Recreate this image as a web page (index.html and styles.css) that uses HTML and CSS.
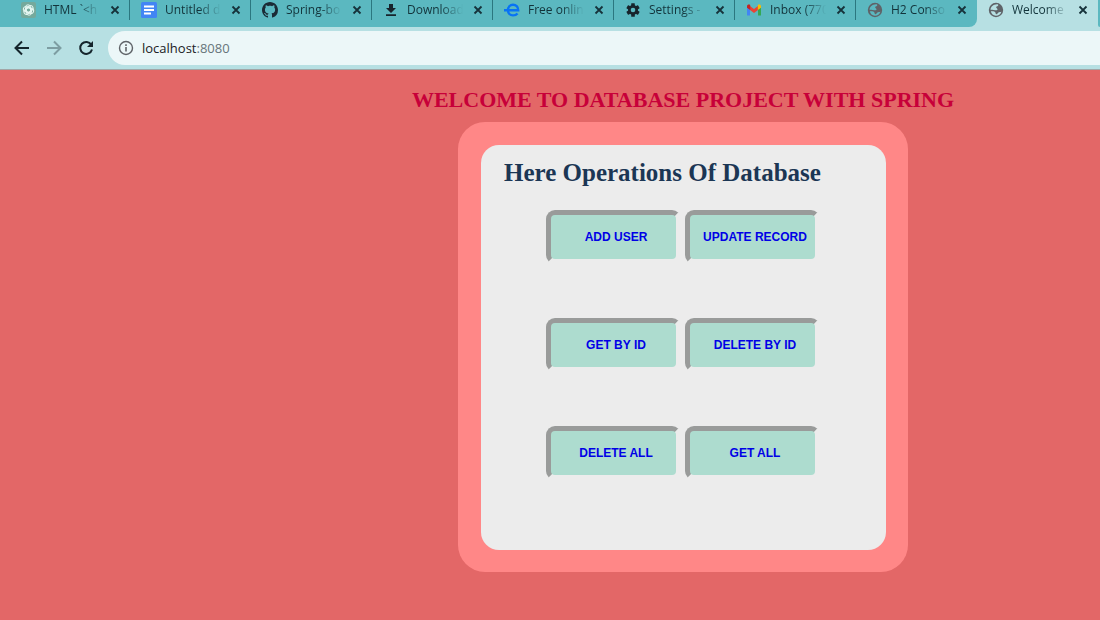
FILE: index.html
```html
<!DOCTYPE html>
<html lang="en">
<head>
<meta charset="utf-8">
<title>Welcome</title>
<link rel="stylesheet" href="styles.css">
</head>
<body>
<svg class="defs" aria-hidden="true">
  <symbol id="close" viewBox="0 0 10 10"><path d="M1.5 1.5l7 7M8.5 1.5l-7 7" stroke="#16323a" stroke-width="1.8" fill="none"/></symbol>
  <symbol id="globe" viewBox="0 0 16 16"><path fill-rule="evenodd" fill="#5f6368" d="M8 .8a7.200 7.200 0 1 0 0 14.400A7.200 7.200 0 0 0 8 .8zM9.500 2.300c.9.300 1 .9.500 1.500-.6.700-2 .6-1.800 1.800.1.900 1.200.7 1.300 1.700.1 1.200-1.600 1-2.700.9-.9-.1-2.500-.6-4.300-.4.200-2.800 2.700-5.700 7-5.500zM2.800 9.300c1.700-.2 3.600-.3 4.300.8.500.8.200 1.700 1.300 2.100.9.300 1.200-.9 2-1.600.9-.8 1.900-.5 3-.8-.8 2.600-3 4.100-5.600 4-2.500-.1-4.400-1.900-5-4.500z"/></symbol>
</svg>
<header class="browser">
  <nav class="tabs" aria-label="Tabs">
    <div class="tab">
      <svg class="icon" viewBox="0 0 16 16"><rect x="1" y="0" width="15" height="16" rx="2" fill="#75a99c"/><g fill="none" stroke="#e5f6f1" stroke-width="1"><rect x="5.500" y="2.800" width="5" height="8" rx="2.500"/><rect x="5.500" y="2.800" width="5" height="8" rx="2.500" transform="rotate(60 8.500 8)"/><rect x="5.500" y="2.800" width="5" height="8" rx="2.500" transform="rotate(120 8.500 8)"/><rect x="5.500" y="2.800" width="5" height="8" rx="2.500" transform="rotate(180 8.500 8)"/><rect x="5.500" y="2.800" width="5" height="8" rx="2.500" transform="rotate(240 8.500 8)"/><rect x="5.500" y="2.800" width="5" height="8" rx="2.500" transform="rotate(300 8.500 8)"/></g></svg>
      <span class="title">HTML `&lt;h</span>
      <button class="close" aria-label="Close tab"><svg><use href="#close"/></svg></button>
    </div>
    <div class="tab">
      <svg class="icon" viewBox="0 0 16 16"><rect width="16" height="16" rx="1.500" fill="#4285f4"/><path d="M3 4.500h10M3 8h10M3 11.500h7" stroke="#fff" stroke-width="1.800"/></svg>
      <span class="title">Untitled d</span>
      <button class="close" aria-label="Close tab"><svg><use href="#close"/></svg></button>
    </div>
    <div class="tab">
      <svg class="icon" viewBox="0 0 16 16"><path fill="#1b2b36" d="M8 0C3.580 0 0 3.580 0 8c0 3.540 2.290 6.530 5.470 7.590.4.070.550-.17.550-.38 0-.19-.01-.82-.01-1.490-2.010.37-2.530-.49-2.690-.94-.09-.23-.48-.94-.82-1.130-.28-.15-.68-.52-.01-.53.630-.01 1.080.58 1.230.82.720 1.210 1.870.87 2.330.66.070-.52.280-.87.510-1.070-1.780-.2-3.640-.89-3.640-3.950 0-.87.310-1.590.82-2.150-.08-.2-.36-1.020.08-2.120 0 0 .67-.21 2.200.82.640-.18 1.320-.27 2-.27s1.360.09 2 .27c1.530-1.040 2.200-.82 2.200-.82.440 1.100.16 1.920.08 2.120.51.560.82 1.270.82 2.150 0 3.070-1.870 3.750-3.650 3.950.29.250.54.730.54 1.480 0 1.070-.01 1.930-.01 2.200 0 .21.150.46.550.38A8 8 0 0 0 16 8c0-4.420-3.580-8-8-8z"/></svg>
      <span class="title">Spring-bo</span>
      <button class="close" aria-label="Close tab"><svg><use href="#close"/></svg></button>
    </div>
    <div class="tab">
      <svg class="icon" viewBox="0 0 16 16"><path d="M6 2h4v4h3L8 11 3 6h3zM3 12.200h10v1.800H3z" fill="#17242c"/></svg>
      <span class="title">Download</span>
      <button class="close" aria-label="Close tab"><svg><use href="#close"/></svg></button>
    </div>
    <div class="tab">
      <svg class="icon" viewBox="0 0 16 16"><path d="M0 8.200h14.200C14.200 4.700 12 2.800 9 2.800S4 5 4 8.200s2 5.200 5 5.200c2 0 3.500-.7 4.500-2" fill="none" stroke="#0873f5" stroke-width="2.400"/></svg>
      <span class="title">Free onlin</span>
      <button class="close" aria-label="Close tab"><svg><use href="#close"/></svg></button>
    </div>
    <div class="tab">
      <svg class="icon" viewBox="0 0 16 16"><g fill="#17242c"><rect x="6.200" y="1.300" width="3.600" height="13.400" rx=".5"/><rect x="6.200" y="1.300" width="3.600" height="13.400" rx=".5" transform="rotate(60 8 8)"/><rect x="6.200" y="1.300" width="3.600" height="13.400" rx=".5" transform="rotate(120 8 8)"/><circle cx="8" cy="8" r="5"/></g><circle cx="8" cy="8" r="2.300" fill="#5bb8c0"/></svg>
      <span class="title">Settings -</span>
      <button class="close" aria-label="Close tab"><svg><use href="#close"/></svg></button>
    </div>
    <div class="tab">
      <svg class="icon" viewBox="0 0 16 16"><path d="M1 4v9.500h3V6z" fill="#4285f4"/><path d="M15 4v9.500h-3V6z" fill="#34a853"/><path d="M4 4l4 3 4-3v4l-4 3-4-3z" fill="#ea4335"/><path d="M1 4.500C1 2.500 3 2 4.200 3v5L1 5.700z" fill="#c5221f"/><path d="M15 4.500c0-2-2-2.500-3.200-1.500v5L15 5.700z" fill="#fbbc04"/></svg>
      <span class="title">Inbox (770</span>
      <button class="close" aria-label="Close tab"><svg><use href="#close"/></svg></button>
    </div>
    <div class="tab before-active">
      <svg class="icon"><use href="#globe"/></svg>
      <span class="title">H2 Conso</span>
      <button class="close" aria-label="Close tab"><svg><use href="#close"/></svg></button>
    </div>
    <div class="tab active">
      <svg class="icon"><use href="#globe"/></svg>
      <span class="title">Welcome</span>
      <button class="close" aria-label="Close tab"><svg><use href="#close"/></svg></button>
    </div>
    <div class="rest"></div>
  </nav>
  <div class="toolbar">
    <button class="tool" aria-label="Back"><svg viewBox="0 0 16 16"><path d="M15 8H2M8 1.500L1.500 8 8 14.500" fill="none" stroke="#15252c" stroke-width="2"/></svg></button>
    <button class="tool" aria-label="Forward"><svg viewBox="0 0 16 16"><path d="M1 8h13M8 1.500L14.500 8 8 14.500" fill="none" stroke="#7d9da2" stroke-width="2"/></svg></button>
    <button class="tool" aria-label="Reload"><svg viewBox="0 0 16 16"><path d="M13.300 4.700A6 6 0 1 0 14 9.500" fill="none" stroke="#15252c" stroke-width="2"/><path d="M15 1v6H9z" fill="#15252c"/></svg></button>
    <div class="address">
      <svg class="info" viewBox="0 0 16 16"><circle cx="8" cy="8" r="6.500" fill="none" stroke="#5f6368" stroke-width="1.400"/><path d="M8 7v4.500M8 4.200v1.700" stroke="#5f6368" stroke-width="1.600"/></svg>
      <span class="url">localhost<span class="port">:8080</span></span>
    </div>
  </div>
</header>
<main class="page">
  <h1 class="welcome">WELCOME TO DATABASE PROJECT WITH SPRING</h1>
  <section class="card">
    <div class="panel">
      <h2 class="heading">Here Operations Of Database</h2>
      <div class="actions">
        <button class="action">ADD USER</button>
        <button class="action">UPDATE RECORD</button>
        <button class="action">GET BY ID</button>
        <button class="action">DELETE BY ID</button>
        <button class="action">DELETE ALL</button>
        <button class="action">GET ALL</button>
      </div>
    </div>
  </section>
</main>
</body>
</html>
```
FILE: styles.css
```css
* { box-sizing: border-box; }
body {
  margin: 0;
  min-height: 100vh;
  display: flex;
  flex-direction: column;
  background: #e36767;
  font-family: "Liberation Serif", "Times New Roman", serif;
}
button { margin: 0; padding: 0; border: 0; background: none; cursor: pointer; }
.defs { display: none; }

.browser {
  overflow: hidden;
  background: #b7e0e3;
  border-bottom: 1px solid #a3a5a6;
  font-family: "Open Sans", "Noto Sans", sans-serif;
}
.tabs { display: flex; height: 27px; padding-left: 9px; background: linear-gradient(90deg, #5bb8c0 50%, #b7e0e3 50%); }
.tab {
  flex: 0 0 121px;
  min-width: 0;
  display: flex;
  align-items: flex-start;
  padding: 2px 10px 0 11px;
  background: linear-gradient(#2b7780, #2b7780) right top / 1px 20px no-repeat #5bb8c0;
}
.before-active { background: #5bb8c0; border-bottom-right-radius: 8px; }
.active { background: #b7e0e3; }
.rest { flex: 1; background: #5bb8c0; border-bottom-left-radius: 8px; }
.icon { flex: none; width: 16px; height: 16px; }
.title {
  flex: 1;
  min-width: 0;
  margin: 0 10px 0 8px;
  overflow: hidden;
  white-space: nowrap;
  font-size: 12px;
  line-height: 16px;
  color: #12333a;
  mask-image: linear-gradient(90deg, #000 60%, transparent);
}
.close { flex: none; display: flex; align-items: center; width: 10px; height: 16px; }
.close svg { width: 10px; height: 10px; }

.toolbar { display: flex; align-items: center; height: 42px; padding-left: 14px; }
.tool { flex: none; width: 16px; height: 16px; margin-right: 16px; }
.tool svg { display: block; width: 16px; height: 16px; }
.address {
  flex: 1;
  display: flex;
  align-items: center;
  gap: 8px;
  height: 34px;
  margin-left: -2px;
  padding-left: 10px;
  border-radius: 17px 0 0 17px;
  background: #ecf7f8;
}
.info { width: 16px; height: 16px; }
.url { font-size: 13px; line-height: 20px; color: #202124; }
.port { color: #66757a; }

.page {
  flex: 1;
  display: flex;
  flex-direction: column;
  align-items: center;
  padding: 16px 0 48px 266px;
}
.welcome { margin: 0 0 8px; font-size: 22px; line-height: 28px; color: #c70039; white-space: nowrap; }
.card { padding: 23px 22px 22px 23px; border-radius: 27px; background: #ff8787; }
.panel {
  width: 405px;
  min-height: 405px;
  padding: 12px 23px;
  border-radius: 18px;
  background: #ececec;
}
.heading { margin: 0; font-size: 25px; line-height: 32px; color: #1b3654; white-space: nowrap; }
.actions {
  display: grid;
  grid-template-columns: repeat(2, 135px);
  gap: 54px 4px;
  margin-top: 21px;
  padding-left: 42px;
}
.action {
  height: 54px;
  padding-left: 5px;
  border: 5px solid;
  border-color: #999b9a #ececec #ececec #999b9a;
  border-radius: 9px;
  background: #addccf;
  font: bold 12px/16px "Liberation Sans", Arial, sans-serif;
  color: #0000e6;
  white-space: nowrap;
}
```
